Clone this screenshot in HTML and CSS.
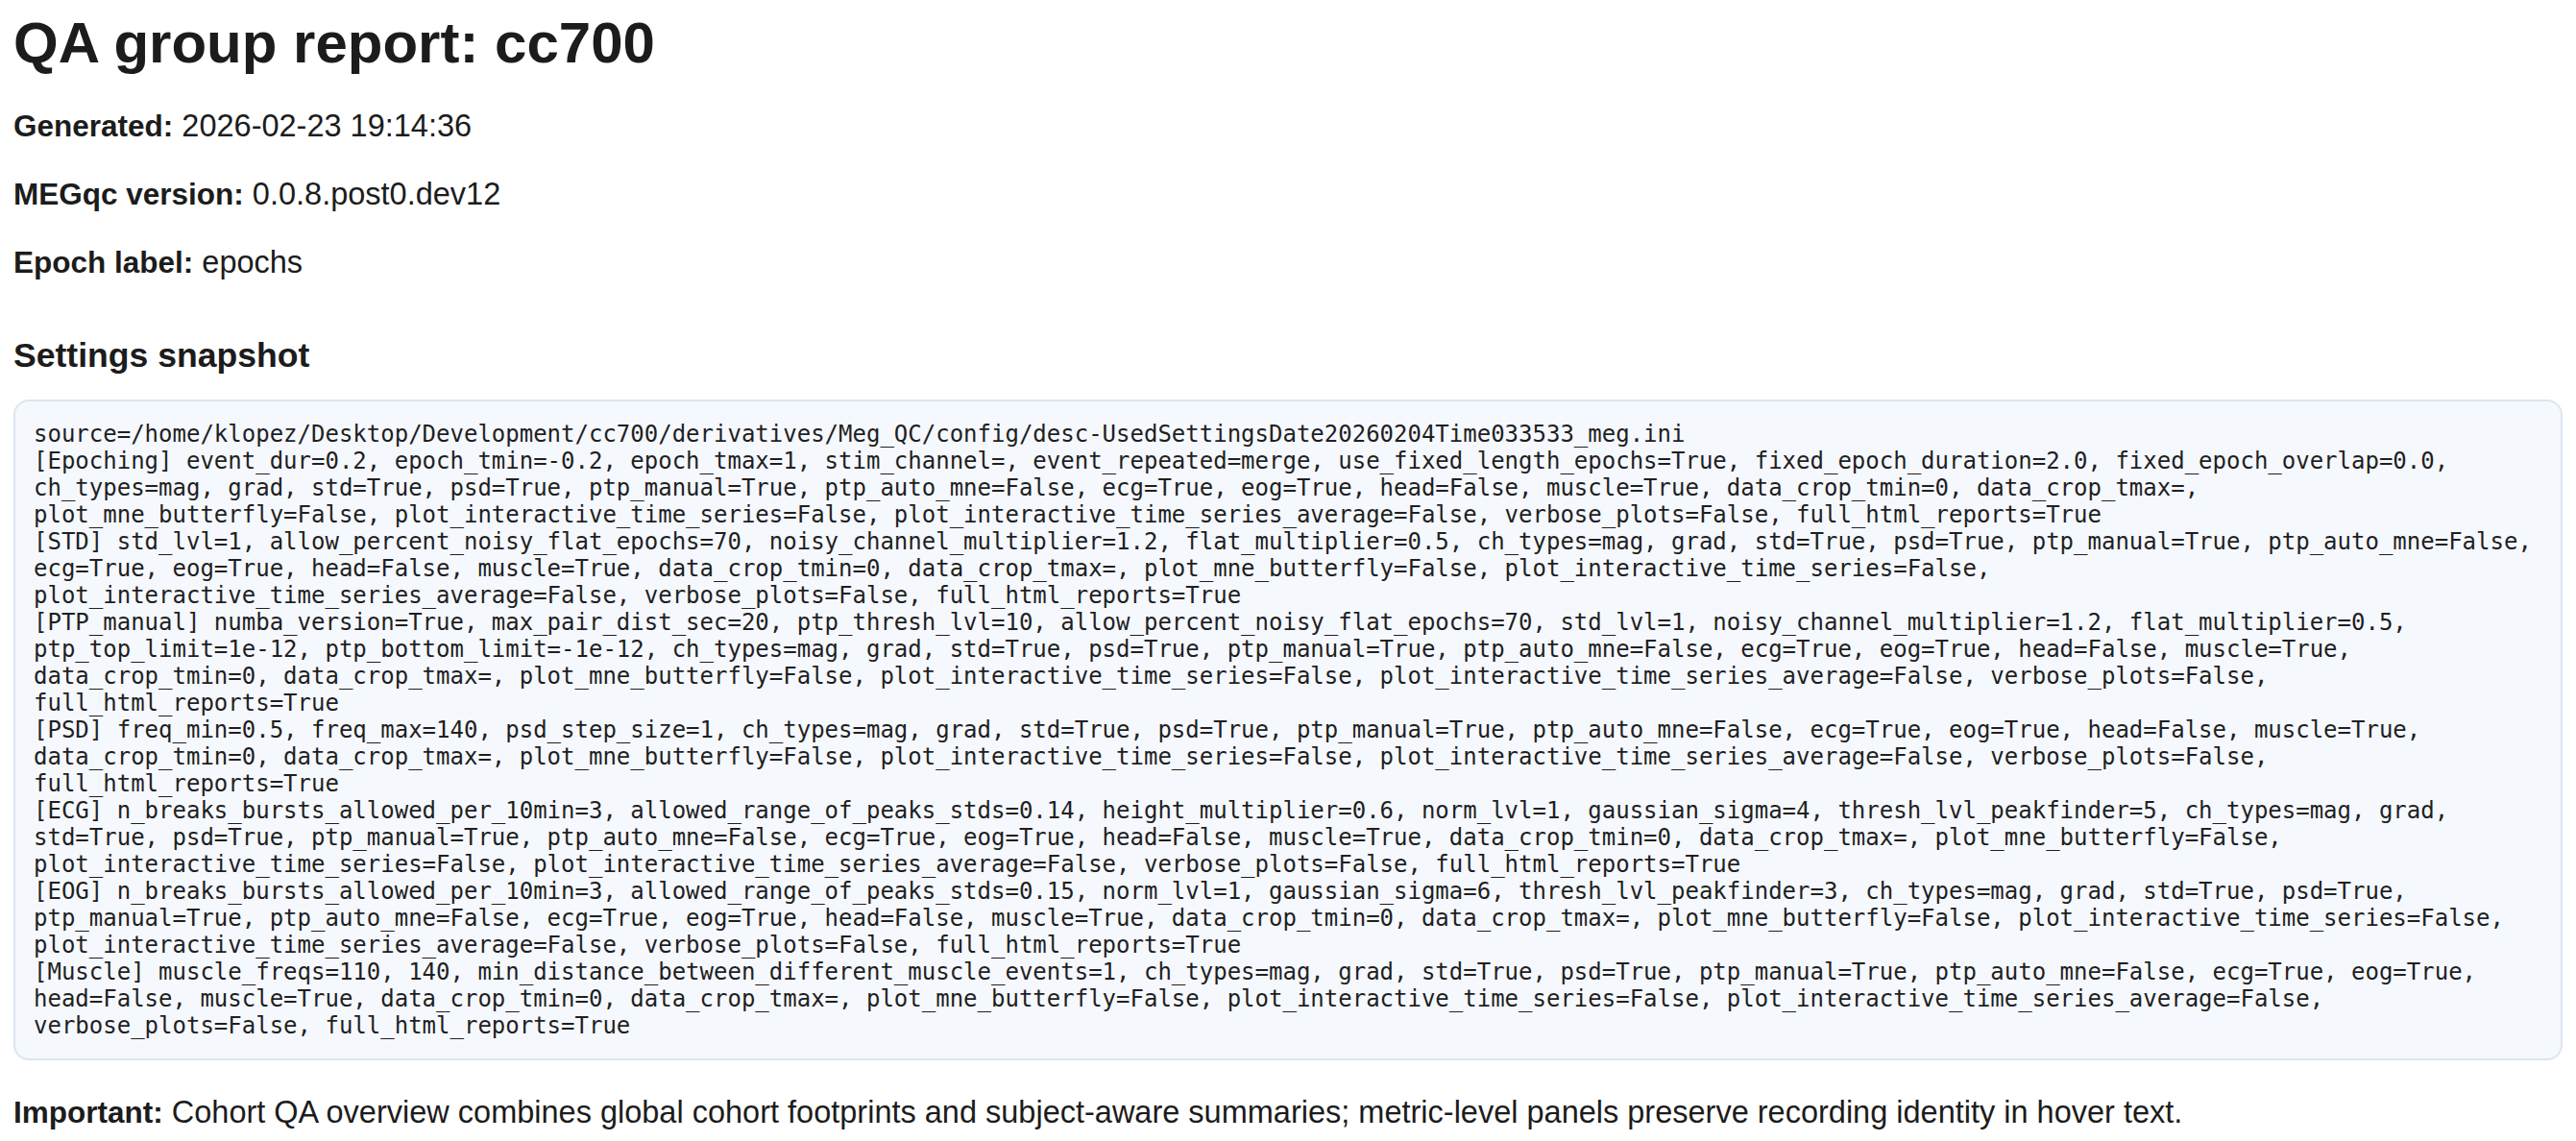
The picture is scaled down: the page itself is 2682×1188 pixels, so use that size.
FILE: index.html
```html
<!DOCTYPE html>
<html lang="en">
<head>
<meta charset="utf-8">
<title>QA group report: cc700</title>
<link rel="stylesheet" href="styles.css">
</head>
<body>
<h1 class="title">QA group report: cc700</h1>
<p class="meta"><strong>Generated:</strong> <span class="timestamp">2026-02-23 19:14:36</span></p>
<p class="meta"><strong>MEGqc version:</strong> 0.0.8.post0.dev12</p>
<p class="meta"><strong>Epoch label:</strong> epochs</p>
<h3 class="section-title">Settings snapshot</h3>
<pre class="settings">source=/home/klopez/Desktop/Development/cc700/derivatives/Meg_QC/config/desc-UsedSettingsDate20260204Time033533_meg.ini
[Epoching] event_dur=0.2, epoch_tmin=-0.2, epoch_tmax=1, stim_channel=, event_repeated=merge, use_fixed_length_epochs=True, fixed_epoch_duration=2.0, fixed_epoch_overlap=0.0,
ch_types=mag, grad, std=True, psd=True, ptp_manual=True, ptp_auto_mne=False, ecg=True, eog=True, head=False, muscle=True, data_crop_tmin=0, data_crop_tmax=,
plot_mne_butterfly=False, plot_interactive_time_series=False, plot_interactive_time_series_average=False, verbose_plots=False, full_html_reports=True
[STD] std_lvl=1, allow_percent_noisy_flat_epochs=70, noisy_channel_multiplier=1.2, flat_multiplier=0.5, ch_types=mag, grad, std=True, psd=True, ptp_manual=True, ptp_auto_mne=False,
ecg=True, eog=True, head=False, muscle=True, data_crop_tmin=0, data_crop_tmax=, plot_mne_butterfly=False, plot_interactive_time_series=False,
plot_interactive_time_series_average=False, verbose_plots=False, full_html_reports=True
[PTP_manual] numba_version=True, max_pair_dist_sec=20, ptp_thresh_lvl=10, allow_percent_noisy_flat_epochs=70, std_lvl=1, noisy_channel_multiplier=1.2, flat_multiplier=0.5,
ptp_top_limit=1e-12, ptp_bottom_limit=-1e-12, ch_types=mag, grad, std=True, psd=True, ptp_manual=True, ptp_auto_mne=False, ecg=True, eog=True, head=False, muscle=True,
data_crop_tmin=0, data_crop_tmax=, plot_mne_butterfly=False, plot_interactive_time_series=False, plot_interactive_time_series_average=False, verbose_plots=False,
full_html_reports=True
[PSD] freq_min=0.5, freq_max=140, psd_step_size=1, ch_types=mag, grad, std=True, psd=True, ptp_manual=True, ptp_auto_mne=False, ecg=True, eog=True, head=False, muscle=True,
data_crop_tmin=0, data_crop_tmax=, plot_mne_butterfly=False, plot_interactive_time_series=False, plot_interactive_time_series_average=False, verbose_plots=False,
full_html_reports=True
[ECG] n_breaks_bursts_allowed_per_10min=3, allowed_range_of_peaks_stds=0.14, height_multiplier=0.6, norm_lvl=1, gaussian_sigma=4, thresh_lvl_peakfinder=5, ch_types=mag, grad,
std=True, psd=True, ptp_manual=True, ptp_auto_mne=False, ecg=True, eog=True, head=False, muscle=True, data_crop_tmin=0, data_crop_tmax=, plot_mne_butterfly=False,
plot_interactive_time_series=False, plot_interactive_time_series_average=False, verbose_plots=False, full_html_reports=True
[EOG] n_breaks_bursts_allowed_per_10min=3, allowed_range_of_peaks_stds=0.15, norm_lvl=1, gaussian_sigma=6, thresh_lvl_peakfinder=3, ch_types=mag, grad, std=True, psd=True,
ptp_manual=True, ptp_auto_mne=False, ecg=True, eog=True, head=False, muscle=True, data_crop_tmin=0, data_crop_tmax=, plot_mne_butterfly=False, plot_interactive_time_series=False,
plot_interactive_time_series_average=False, verbose_plots=False, full_html_reports=True
[Muscle] muscle_freqs=110, 140, min_distance_between_different_muscle_events=1, ch_types=mag, grad, std=True, psd=True, ptp_manual=True, ptp_auto_mne=False, ecg=True, eog=True,
head=False, muscle=True, data_crop_tmin=0, data_crop_tmax=, plot_mne_butterfly=False, plot_interactive_time_series=False, plot_interactive_time_series_average=False,
verbose_plots=False, full_html_reports=True</pre>
<p class="note"><strong>Important:</strong> Cohort QA overview combines global cohort footprints and subject-aware summaries; metric-level panels preserve recording identity in hover text.</p>
</body>
</html>
```

FILE: styles.css
```css
html {
  background: #ffffff;
}

body {
  margin: 0;
  padding: 10px 14px 0;
  font-family: "Liberation Sans", Arial, Helvetica, sans-serif;
  color: #1c1c1c;
  background: #ffffff;
}

.title {
  font-size: 60px;
  line-height: 69px;
  font-weight: 700;
  margin: 0 0 32px;
}

.meta {
  font-size: 32.5px;
  line-height: 41px;
  margin: 30px 0;
}

.meta strong,
.note strong {
  font-size: 31.5px;
  font-weight: 700;
}

.timestamp {
  font-family: "Liberation Sans Narrow", "Liberation Sans", sans-serif;
}

.section-title {
  font-size: 35.6px;
  line-height: 40px;
  font-weight: 700;
  margin: 56px 0 26px;
}

.settings {
  margin: 0;
  padding: 20px 19px;
  background: #f5f8fd;
  border: 2px solid #dce5f1;
  border-radius: 16px;
  font-family: "DejaVu Sans Mono", "Liberation Mono", monospace;
  font-size: 24px;
  line-height: 28px;
  color: #1f1f1f;
  white-space: pre-wrap;
  overflow-wrap: break-word;
}

.note {
  font-size: 32.5px;
  line-height: 41px;
  margin: 34px 0 0;
}
```
